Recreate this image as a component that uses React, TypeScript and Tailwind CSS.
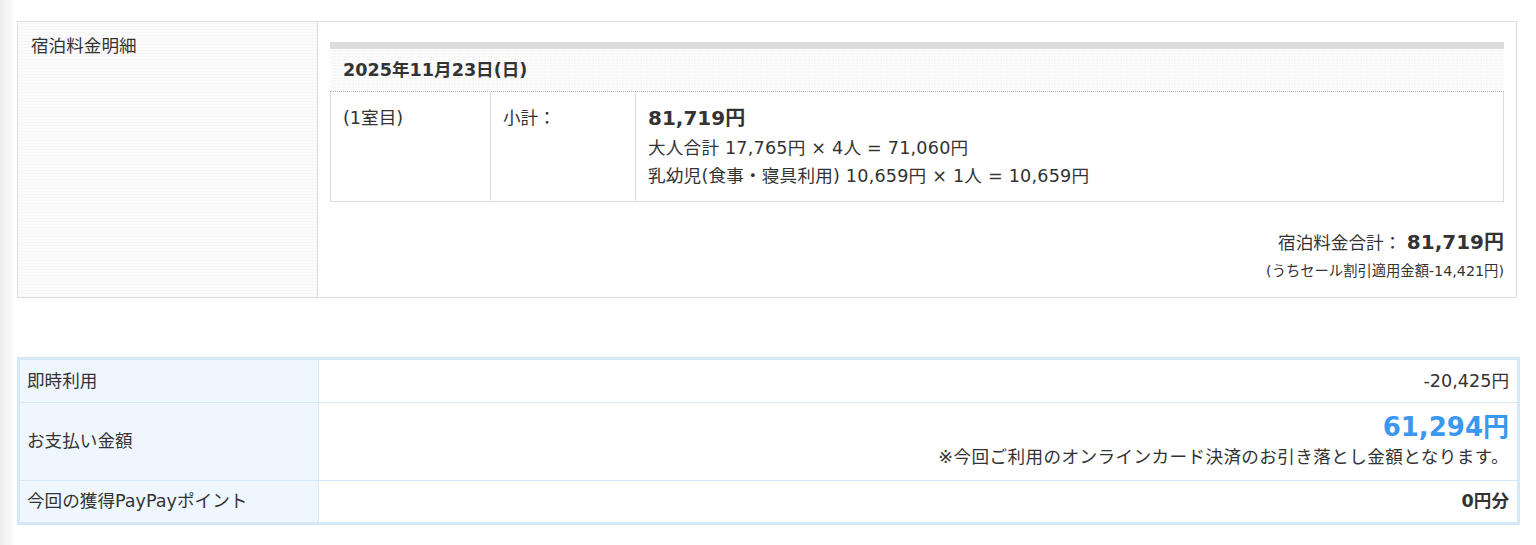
import React from "react";

const font = { fontFamily: '"DejaVu Sans", "Noto Sans CJK JP", sans-serif' };

export default function App() {
  return (
    <div className="flex min-h-[545px] bg-white text-[#333]" style={font}>
      <div className="w-[16px] shrink-0 bg-gradient-to-r from-[#ececec] to-white" />
      <div className="ml-[1px] pt-[21px] w-[1503px]">
        {/* Top table */}
        <div className="flex w-[1500px] border border-[#dddddd]">
          <div className="w-[300px] shrink-0 border-r border-[#dddddd] bg-[repeating-linear-gradient(0deg,#f6f6f6_0px,#f6f6f6_1px,#fbfbfb_1px,#fbfbfb_3px)] pl-[13px] pt-[10px] text-[17.6px] leading-[28px]">
            宿泊料金明細
          </div>
          <div className="flex-1 px-[12px] pt-[20px] pb-[15px]">
            <div className="h-[7px] bg-[#dcdcdc]" />
            <div className="h-[43px] border-b border-dotted border-[#b8b8b8] bg-[#f4f4f4] bg-[linear-gradient(90deg,#ffffff_1px,transparent_1px),linear-gradient(#ffffff_1px,transparent_1px)] bg-[size:3px_3px] pl-[13px] text-[17.6px] font-bold leading-[42px]">
              2025年11月23日(日)
            </div>
            <div className="flex border-x border-b border-[#dddddd] text-[17.6px]">
              <div className="w-[160px] shrink-0 border-r border-[#dddddd] pl-[12px] pt-[11px] leading-[31px]">
                (1室目)
              </div>
              <div className="w-[145px] shrink-0 border-r border-[#dddddd] pl-[12px] pt-[11px] leading-[31px]">
                小計：
              </div>
              <div className="flex-1 pl-[12px] pt-[11px] pb-[11px]">
                <div className="text-[20px] font-bold leading-[31px]">81,719円</div>
                <div className="leading-[28px] tracking-[0.2px]">大人合計 17,765円 × 4人 = 71,060円</div>
                <div className="leading-[28px] tracking-[0.2px]">乳幼児(食事・寝具利用) 10,659円 × 1人 = 10,659円</div>
              </div>
            </div>
            <div className="mt-[24px] text-right">
              <div className="leading-[32px]">
                <span className="text-[17.6px]">宿泊料金合計： </span>
                <span className="text-[20px] font-bold">81,719円</span>
              </div>
              <div className="text-[14.3px] leading-[22px]">(うちセール割引適用金額-14,421円)</div>
            </div>
          </div>
        </div>

        {/* Bottom table */}
        <div className="mt-[59px] w-[1503px] border-[3px] border-[#d5e8f8] text-[17.6px]">
          <div className="flex border-b border-[#d5e8f8]">
            <div className="w-[299px] shrink-0 border-r border-[#d5e8f8] bg-[#eff7fe] pl-[7px] leading-[42px]">
              即時利用
            </div>
            <div className="flex-1 pr-[8px] text-right leading-[42px]">-20,425円</div>
          </div>
          <div className="flex border-b border-[#d5e8f8]">
            <div className="flex w-[299px] shrink-0 items-center border-r border-[#d5e8f8] bg-[#eff7fe] pl-[7px]">
              お支払い金額
            </div>
            <div className="flex-1 pr-[8px] pt-[8px] pb-[9px] text-right">
              <div className="text-[26px] font-bold leading-[32px] text-[#3a98f0]">61,294円</div>
              <div className="leading-[28px] tracking-[0.4px]">※今回ご利用のオンラインカード決済のお引き落とし金額となります。</div>
            </div>
          </div>
          <div className="flex">
            <div className="w-[299px] shrink-0 border-r border-[#d5e8f8] bg-[#eff7fe] pl-[7px] leading-[41px]">
              今回の獲得PayPayポイント
            </div>
            <div className="flex-1 pr-[8px] text-right font-bold leading-[41px]">0円分</div>
          </div>
        </div>
      </div>
    </div>
  );
}
